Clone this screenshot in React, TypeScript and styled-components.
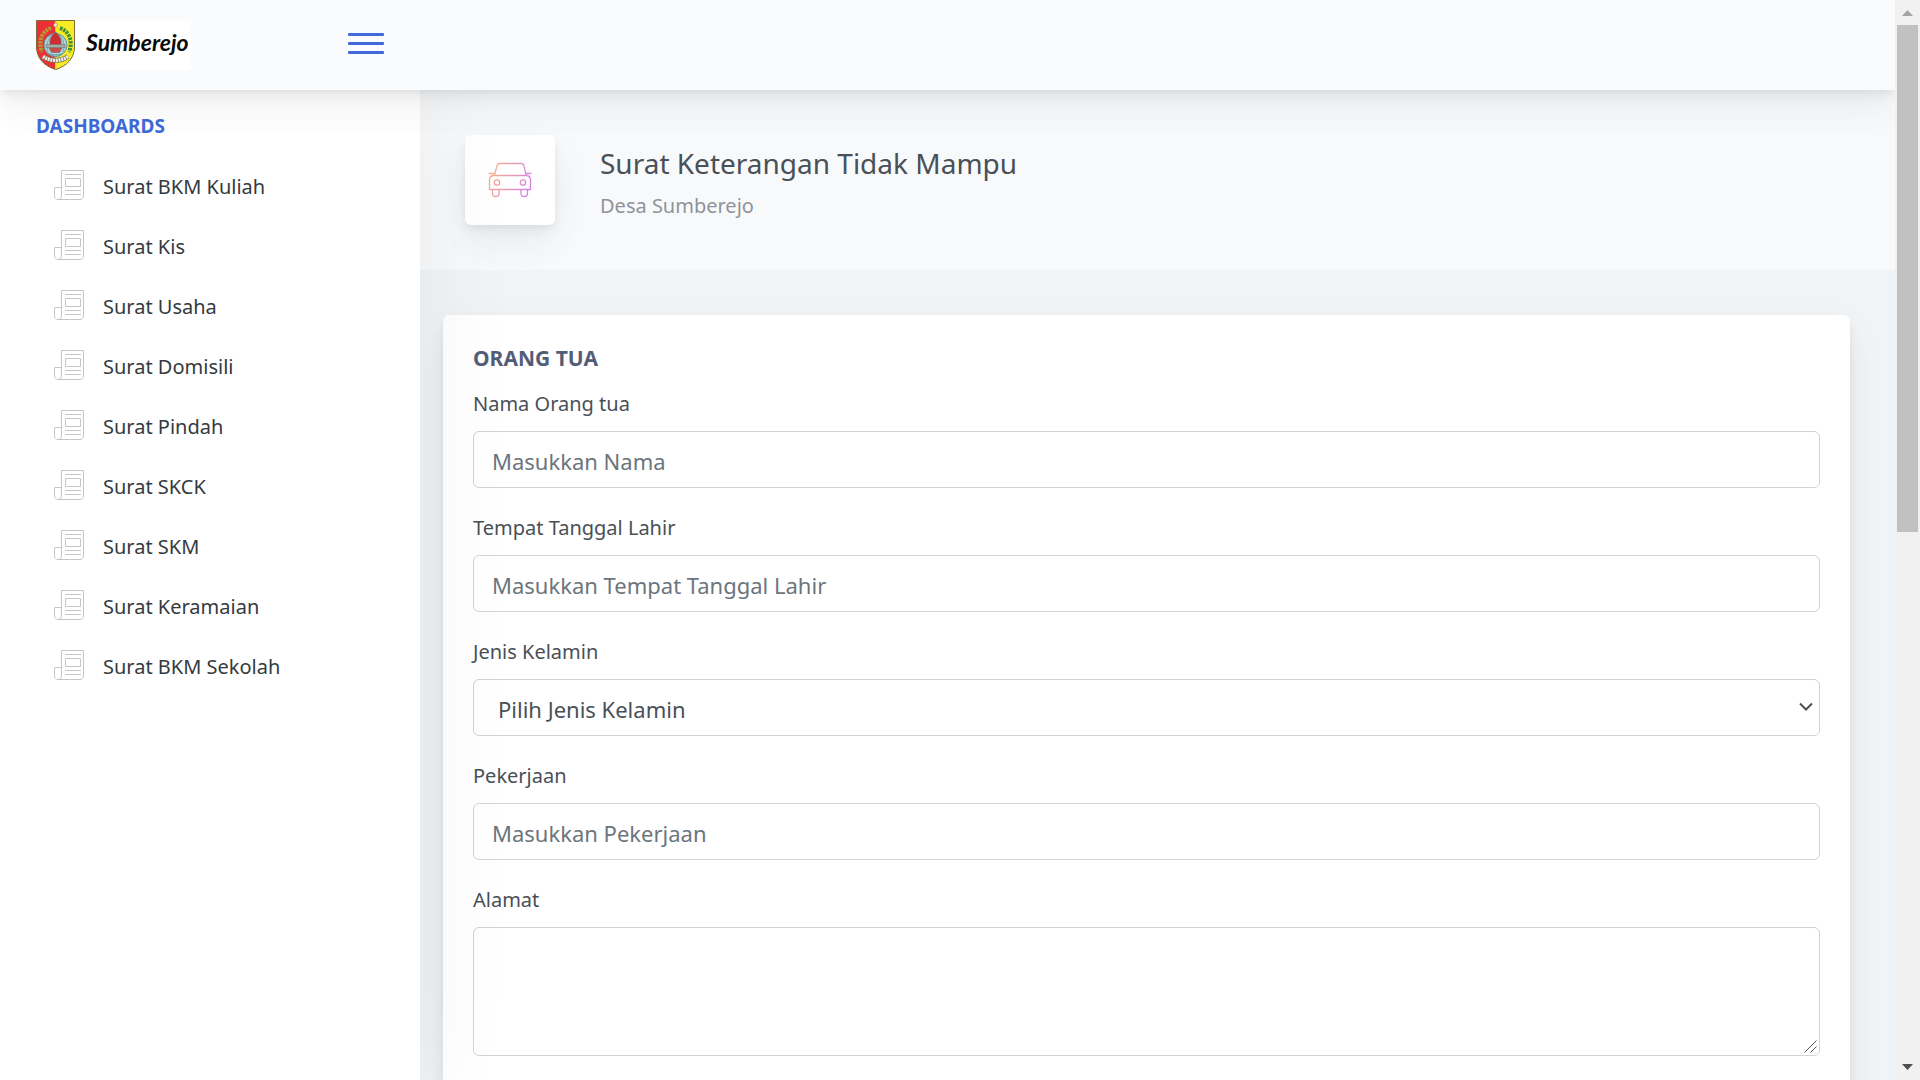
import React from 'react';
import styled, { createGlobalStyle, css } from 'styled-components';

const elevation = css`
  box-shadow: 0 11px 53px rgba(4, 9, 20, 0.03), 0 23px 34px rgba(4, 9, 20, 0.03),
    0 6px 13px rgba(4, 9, 20, 0.05), 0 3px 5px rgba(4, 9, 20, 0.03);
`;

const GlobalStyle = createGlobalStyle`
  *, *::before, *::after { box-sizing: border-box; }
  body {
    margin: 0;
    overflow: hidden;
    background: #f1f4f6;
    color: #495057;
    font-family: "Segoe UI", "Noto Sans", "Open Sans", sans-serif;
    font-size: 20px;
    line-height: 30px;
  }
  input, select, textarea, button { font-family: inherit; }
`;

const Screen = styled.div`
  display: flex;
  height: 100vh;
  overflow: hidden;
`;

const Page = styled.div`
  flex: 1;
  min-width: 0;
  display: flex;
  flex-direction: column;
  overflow: hidden;
`;

const Header = styled.header`
  position: relative;
  z-index: 3;
  flex: none;
  display: flex;
  align-items: center;
  justify-content: space-between;
  height: 90px;
  background: #fafbfc;
  ${elevation}
`;

const HeaderBrand = styled.div`
  display: flex;
  align-items: center;
  justify-content: space-between;
  width: 420px;
  padding: 0 36px;
`;

const Logo = styled.a`
  display: flex;
  align-items: center;
  gap: 11px;
  width: 155px;
  height: 50px;
  background: #fff;
  color: #0b0b0b;
  text-decoration: none;
  white-space: nowrap;
`;

const Wordmark = styled.span`
  font-family: "Segoe Script", Lato, sans-serif;
  font-size: 23px;
  font-style: italic;
  font-weight: 700;
  line-height: 40px;
  padding-bottom: 6px;
`;

const MenuToggle = styled.button`
  display: flex;
  flex-direction: column;
  gap: 6px;
  width: 36px;
  margin-bottom: 3px;
  padding: 0;
  border: 0;
  background: none;
  cursor: pointer;
`;

const ToggleBar = styled.span`
  height: 3px;
  border-radius: 1px;
  background: #3f6ad8;
`;

const Body = styled.div`
  flex: 1;
  min-height: 0;
  display: flex;
`;

const Sidebar = styled.nav`
  position: relative;
  z-index: 2;
  flex: none;
  width: 420px;
  padding: 6px 36px;
  background: #fff;
  box-shadow: 11px 0 90px rgba(0, 0, 0, 0.05);
`;

const SidebarHeading = styled.h2`
  margin: 0;
  color: #3f6ad8;
  font-size: 19px;
  font-weight: 700;
  line-height: 60px;
  text-transform: uppercase;
`;

const MenuList = styled.ul`
  margin: 0;
  padding: 0;
  list-style: none;
`;

const MenuLink = styled.a`
  display: flex;
  align-items: center;
  gap: 19px;
  height: 60px;
  padding: 2px 0 0 18px;
  color: #343a40;
  text-decoration: none;

  svg { margin-bottom: 4px; }
`;

const Main = styled.main`
  flex: 1;
  min-width: 0;
  overflow: hidden;
`;

const TitleBar = styled.section`
  display: flex;
  align-items: center;
  gap: 45px;
  height: 180px;
  padding: 45px;
  background: #f8f9fb;
`;

const TitleIcon = styled.div`
  display: grid;
  place-items: center;
  width: 90px;
  height: 90px;
  border-radius: 6px;
  background: #fff;
  ${elevation}
`;

const TitleText = styled.div`
  padding-top: 5px;
`;

const PageTitle = styled.h1`
  margin: 0;
  font-size: 28px;
  font-weight: 400;
  line-height: 42px;
`;

const Subtitle = styled.p`
  margin: 4px 0 0;
  line-height: 36px;
  opacity: 0.6;
`;

const Card = styled.form`
  margin: 45px 45px 0 23px;
  padding: 30px 30px 120px;
  border-radius: 6px;
  background: #fff;
  ${elevation}
`;

const CardTitle = styled.h2`
  margin: 0 0 18px;
  color: #545d78;
  font-size: 21px;
  font-weight: 700;
  line-height: 26px;
  text-transform: uppercase;
`;

const Field = styled.div`
  display: flex;
  flex-direction: column;
  margin-bottom: 24px;
`;

const Label = styled.label`
  margin-bottom: 11px;
  line-height: 32px;
`;

const FirstFields = styled.div`
  margin-top: -1px;
`;

const control = css`
  width: 100%;
  height: 57px;
  margin: 0;
  padding: 10px 18px 8px;
  border: 1px solid #ced4da;
  border-radius: 6px;
  background: #fff;
  color: #495057;
  font-size: 22px;
  line-height: 36px;
  outline: none;
`;

const TextInput = styled.input`
  ${control}
  &::placeholder { color: #6c757d; opacity: 1; }
`;

const resizeGrip =
  "data:image/svg+xml,%3Csvg xmlns='http://www.w3.org/2000/svg' width='18' height='18'%3E%3Cpath d='M3.500 15.500l12-12M9.500 15.500l6-6' stroke='%23505050' fill='none'/%3E%3C/svg%3E";

const TextArea = styled.textarea`
  ${control}
  display: block;
  height: 129px;
  resize: vertical;

  &::-webkit-scrollbar { width: 18px; height: 18px; }
  &::-webkit-resizer { background: url("${resizeGrip}") no-repeat right bottom; }
`;

const SelectBox = styled.div`
  position: relative;

  svg {
    position: absolute;
    top: 22px;
    right: 7px;
    pointer-events: none;
  }
`;

const SelectInput = styled.select`
  ${control}
  padding: 10px 24px 8px;
  appearance: none;
`;

const Scrollbar = styled.div`
  flex: none;
  display: flex;
  flex-direction: column;
  width: 25px;
  padding: 0 2px;
  background: #f1f1f1;
`;

const ScrollArrow = styled.svg`
  flex: none;
  width: 21px;
  height: 25px;
`;

const ScrollTrack = styled.div`
  flex: 1;
`;

const ScrollThumb = styled.div`
  height: 49.2%;
  background: #c1c1c1;
`;

const Crest = () => (
  <svg width="39" height="50" viewBox="0 0 39 50" aria-hidden="true">
    <path d="M.5.5h19v49C8 46 .5 38 .5 27z" fill="#ed2f35" />
    <path d="M19.500.5h19V27c0 11-7.500 19-19 22.500z" fill="#f8ed25" />
    <path d="M.5.5h38V27c0 11-7.500 19-19 22.500C8 46 .5 38 .5 27z" fill="none" stroke="#7b6a3c" />
    <path d="M15 8C5 12 2 22 6 32" fill="none" stroke="#a9a033" strokeWidth="4" strokeDasharray="2.500 1" />
    <path d="M24 8c10 4 13 14 9 24" fill="none" stroke="#3c8f42" strokeWidth="4" strokeDasharray="2.500 1" />
    <circle cx="19.500" cy="25" r="11.500" fill="#a5d8df" stroke="#6d8c8f" />
    <path d="M12 32c-3-8 1-16 7.500-20C26 16 30 24 27 32" fill="none" stroke="#6f9ba0" strokeWidth=".8" />
    <path d="M19.500 12.500c4.500 3.500 6.500 8 5 13h-10c-1.500-5 .5-9.500 5-13z" fill="#d22e31" stroke="#7c4442" strokeWidth=".7" />
    <path d="M10 24.500h19v3H10z" fill="#a9aaa5" stroke="#6e7371" strokeWidth=".6" />
    <path d="M13 28h13l-2.500 4.500h-8z" fill="#cf4d4b" stroke="#84605d" strokeWidth=".6" />
    <path d="M12 33.500c5 2 10 2 15 0" fill="none" stroke="#5f9aa2" />
    <path d="M7 36.500c7 5 18 5 25 0" fill="none" stroke="#72735d" strokeWidth="5" />
    <path d="M7 36.500c7 5 18 5 25 0" fill="none" stroke="#f4f1e4" strokeWidth="3.500" strokeDasharray="2 .7" />
    <circle cx="19.500" cy="5" r="2" fill="#f1e9d2" stroke="#a77a52" strokeWidth=".6" />
  </svg>
);

const NewsIcon = () => (
  <svg width="30" height="30" viewBox="0 0 30 30" fill="none" stroke="#c6c6c6" aria-hidden="true">
    <path d="M7.500 26V.5h22V26c0 2-1.500 3.500-3.500 3.500H4C2 29.500.5 28 .5 26v-8.500h7V26c0 2-1.500 3.500-3.500 3.500" />
    <path d="M11 4.500h16M11.500 8.500h15v8h-15zM11 20.500h16M11 24.500h16" />
  </svg>
);

const CarIcon = () => (
  <svg width="44" height="36" viewBox="0 0 44 36" fill="none" stroke="url(#carTint)" strokeWidth="1.300" aria-hidden="true">
    <defs>
      <linearGradient id="carTint" gradientUnits="userSpaceOnUse" x1="2" y1="8" x2="42" y2="24">
        <stop offset="0" stopColor="#f6b38c" />
        <stop offset="1" stopColor="#d982e4" />
      </linearGradient>
    </defs>
    <path d="M6.500 13 9 3.800C9.500 2 10.500 1.500 12 1.500h21c1.500 0 2.500.5 3 2.300L38 13" />
    <path d="M.5 11.500h6M37.500 11.500h6" />
    <path d="M1.500 27.500V18c0-3 1.500-4.500 4.500-4.500h32c3 0 4.500 1.500 4.500 4.500v9.500z" />
    <circle cx="9" cy="20.500" r="2.700" />
    <circle cx="35" cy="20.500" r="2.700" />
    <path d="M4.500 28v3.500c0 4 6.500 4 6.500 0V28M33 28v3.500c0 4 6.500 4 6.500 0V28" />
  </svg>
);

const Chevron = () => (
  <svg width="14" height="12" viewBox="0 0 14 12" fill="none" stroke="#495057" strokeWidth="2" aria-hidden="true">
    <path d="M1 2.500 7 8.500 13 2.500" />
  </svg>
);

const menuItems = [
  'Surat BKM Kuliah',
  'Surat Kis',
  'Surat Usaha',
  'Surat Domisili',
  'Surat Pindah',
  'Surat SKCK',
  'Surat SKM',
  'Surat Keramaian',
  'Surat BKM Sekolah',
];

type TextFieldProps = { id: string; label: string; placeholder: string };

const TextField = ({ id, label, placeholder }: TextFieldProps) => (
  <Field>
    <Label htmlFor={id}>{label}</Label>
    <TextInput id={id} name={id} type="text" placeholder={placeholder} />
  </Field>
);

export default function App() {
  return (
    <>
      <GlobalStyle />
      <Screen>
        <Page>
          <Header>
            <HeaderBrand>
              <Logo href="#">
                <Crest />
                <Wordmark>Sumberejo</Wordmark>
              </Logo>
              <MenuToggle type="button" aria-label="Menu">
                <ToggleBar />
                <ToggleBar />
                <ToggleBar />
              </MenuToggle>
            </HeaderBrand>
          </Header>
          <Body>
            <Sidebar>
              <SidebarHeading>Dashboards</SidebarHeading>
              <MenuList>
                {menuItems.map((item) => (
                  <li key={item}>
                    <MenuLink href="#">
                      <NewsIcon />
                      {item}
                    </MenuLink>
                  </li>
                ))}
              </MenuList>
            </Sidebar>
            <Main>
              <TitleBar>
                <TitleIcon>
                  <CarIcon />
                </TitleIcon>
                <TitleText>
                  <PageTitle>Surat Keterangan Tidak Mampu</PageTitle>
                  <Subtitle>Desa Sumberejo</Subtitle>
                </TitleText>
              </TitleBar>
              <Card>
                <CardTitle>Orang Tua</CardTitle>
                <FirstFields>
                  <TextField id="nama" label="Nama Orang tua" placeholder="Masukkan Nama" />
                  <TextField id="ttl" label="Tempat Tanggal Lahir" placeholder="Masukkan Tempat Tanggal Lahir" />
                  <Field>
                    <Label htmlFor="kelamin">Jenis Kelamin</Label>
                    <SelectBox>
                      <SelectInput id="kelamin" name="kelamin">
                        <option>Pilih Jenis Kelamin</option>
                      </SelectInput>
                      <Chevron />
                    </SelectBox>
                  </Field>
                  <TextField id="pekerjaan" label="Pekerjaan" placeholder="Masukkan Pekerjaan" />
                  <Field>
                    <Label htmlFor="alamat">Alamat</Label>
                    <TextArea id="alamat" name="alamat" />
                  </Field>
                </FirstFields>
              </Card>
            </Main>
          </Body>
        </Page>
        <Scrollbar aria-hidden="true">
          <ScrollArrow viewBox="0 0 21 25">
            <path d="M5 16h11l-5.500-6z" fill="#a3a3a3" />
          </ScrollArrow>
          <ScrollTrack>
            <ScrollThumb />
          </ScrollTrack>
          <ScrollArrow viewBox="0 0 21 25">
            <path d="M5 9h11l-5.500 6z" fill="#505050" />
          </ScrollArrow>
        </Scrollbar>
      </Screen>
    </>
  );
}
